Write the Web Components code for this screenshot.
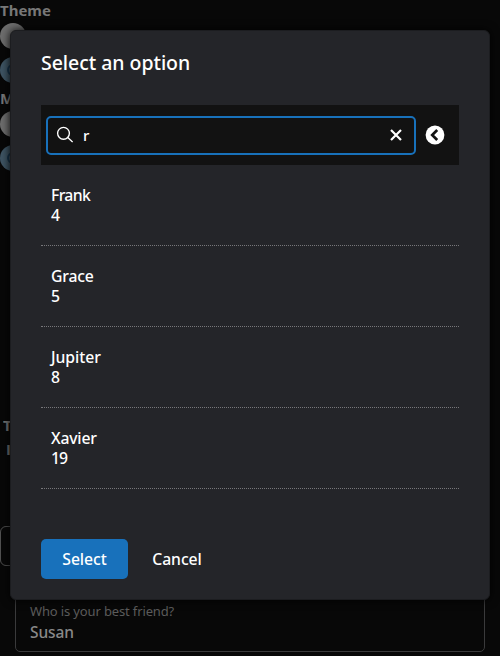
<!DOCTYPE html>
<html lang="en">
<head>
<meta charset="utf-8">
<title>Select an option</title>
<style>
html, body { margin: 0; height: 656px; overflow: hidden; background: #080808; }
body { font-family: "Noto Sans", "Open Sans", sans-serif; font-size: 15px; color: #fff; }
</style>
</head>
<body>
<form-page></form-page>
<option-dialog heading="Select an option">
  <search-bar slot="search" value="r"></search-bar>
  <option-row name="Frank" count="4" style="--track:-.65px"></option-row>
  <option-row name="Grace" count="5" style="--track:-.2px"></option-row>
  <option-row name="Jupiter" count="8" style="--track:-.05px"></option-row>
  <option-row name="Xavier" count="19" style="--track:-.2px"></option-row>
  <action-button slot="actions" primary>Select</action-button>
  <action-button slot="actions">Cancel</action-button>
</option-dialog>
<script>
class BaseElement extends HTMLElement {
  connectedCallback() {
    if (!this.shadowRoot) this.attachShadow({ mode: 'open' }).innerHTML = this.render();
  }
}

customElements.define('radio-dot', class extends BaseElement {
  render() {
    return `<style>
      :host { display: block; box-sizing: border-box; width: 26px; height: 26px; border-radius: 50%; background: #6e6e6e; }
      :host([checked]) { background: #3e5463; display: grid; place-items: center; }
      i { display: none; }
      :host([checked]) i { display: block; width: 8px; height: 8px; border-radius: 50%; border: 2px solid #17364d; }
    </style><i></i>`;
  }
});

customElements.define('text-field', class extends BaseElement {
  render() {
    return `<style>
      :host { display: flex; flex-direction: column; box-sizing: border-box; border: 1px solid #3a3a3b; border-radius: 5px; padding: 6px 14px 0; }
      label { font-size: 13px; line-height: 18px; letter-spacing: -.14px; color: #5b5b5b; }
      span { font-size: 15.5px; line-height: 24px; letter-spacing: -.1px; font-weight: 500; color: #898989; }
    </style><label>${this.getAttribute('label')}</label><span>${this.getAttribute('value')}</span>`;
  }
});

customElements.define('form-page', class extends BaseElement {
  render() {
    return `<style>
      :host { display: flex; flex-direction: column; height: 656px; color: #777; font-weight: 700; }
      .group { display: grid; grid-template-rows: 23px 26px 26px; height: 88px; }
      .group radio-dot[checked] { margin-top: 8px; }
      h3 { margin: 0; font-size: 15px; line-height: 21px; }
      .table { margin: 237px 0 0 3px; line-height: 24px; display: flex; flex-direction: column; overflow: hidden; width: 8px; height: 50px; }
      .table span + span { padding-left: 3px; font-family: "Open Sans", sans-serif; }
      .box { box-sizing: border-box; width: 80px; height: 40px; margin-top: 63px; border: 1px solid #505050; border-radius: 6px; }
      text-field { margin: 29px 15px 0; height: 57px; font-weight: 400; }
    </style>
    <div class="group"><h3>Theme</h3><radio-dot></radio-dot><radio-dot checked></radio-dot></div>
    <div class="group"><h3>M</h3><radio-dot></radio-dot><radio-dot checked></radio-dot></div>
    <div class="table"><span>T</span><span>I</span></div>
    <div class="box"></div>
    <text-field label="Who is your best friend?" value="Susan"></text-field>`;
  }
});

customElements.define('search-bar', class extends BaseElement {
  render() {
    return `<style>
      :host { display: flex; align-items: center; box-sizing: border-box; height: 60px; padding: 0 14px 0 5px; gap: 9px; background: #121212; }
      .field { flex: 1; display: flex; align-items: center; box-sizing: border-box; height: 39px; border: 2px solid #1871bb; border-radius: 5px; padding: 0 11px 0 8px; }
      .field span { flex: 1; margin-left: 10px; font-size: 15px; font-weight: 500; }
      svg { display: block; flex: none; }
    </style>
    <div class="field">
      <svg width="17" height="18" viewBox="0 0 17 18" fill="none" stroke="#fff" stroke-width="1.35"><circle cx="7.5" cy="7.3" r="5.9"/><path d="M11.8 11.6l4.8 4.5"/></svg>
      <span>${this.getAttribute('value')}</span>
      <svg width="14" height="14" viewBox="0 0 14 14" fill="none" stroke="#fff" stroke-width="2.2"><path d="M2 2l10 10M12 2L2 12"/></svg>
    </div>
    <svg width="20" height="20" viewBox="0 0 20 20"><circle cx="10" cy="10" r="9.4" fill="#fff"/><path d="M12.2 5L7.2 10l5 5" fill="none" stroke="#121212" stroke-width="2.7"/></svg>`;
  }
});

customElements.define('option-row', class extends BaseElement {
  render() {
    return `<style>
      :host { display: flex; flex-direction: column; box-sizing: border-box; height: 81px; padding: 20px 10px 0; border-bottom: 1px dotted #77777a; font-size: 15.75px; line-height: 20px; font-weight: 500; }
      .name { letter-spacing: var(--track, 0); }
      .count { letter-spacing: -1px; }
    </style><span class="name">${this.getAttribute('name')}</span><span class="count">${this.getAttribute('count')}</span>`;
  }
});

customElements.define('action-button', class extends BaseElement {
  render() {
    return `<style>
      :host { display: grid; place-items: center; box-sizing: border-box; width: 98px; height: 40px; border-radius: 5px; font-size: 15.75px; letter-spacing: -.05px; font-weight: 500; }
      :host([primary]) { width: 87px; background: #1871bb; }
    </style><slot></slot>`;
  }
});

customElements.define('option-dialog', class extends BaseElement {
  render() {
    return `<style>
      :host { position: absolute; left: 10px; top: 30px; width: 480px; height: 570px; box-sizing: border-box; display: flex; flex-direction: column; padding: 17px 30px 20px; background: #242529; border: 1px solid #1c1d20; border-radius: 6px; box-shadow: 0 0 10px #000; }
      h2 { margin: 0 0 27px; font-size: 19.5px; letter-spacing: -.04px; line-height: 30px; font-weight: 500; }
      .actions { display: flex; margin-top: auto; }
    </style>
    <h2>${this.getAttribute('heading')}</h2>
    <slot name="search"></slot>
    <slot></slot>
    <div class="actions"><slot name="actions"></slot></div>`;
  }
});
</script>
</body>
</html>
